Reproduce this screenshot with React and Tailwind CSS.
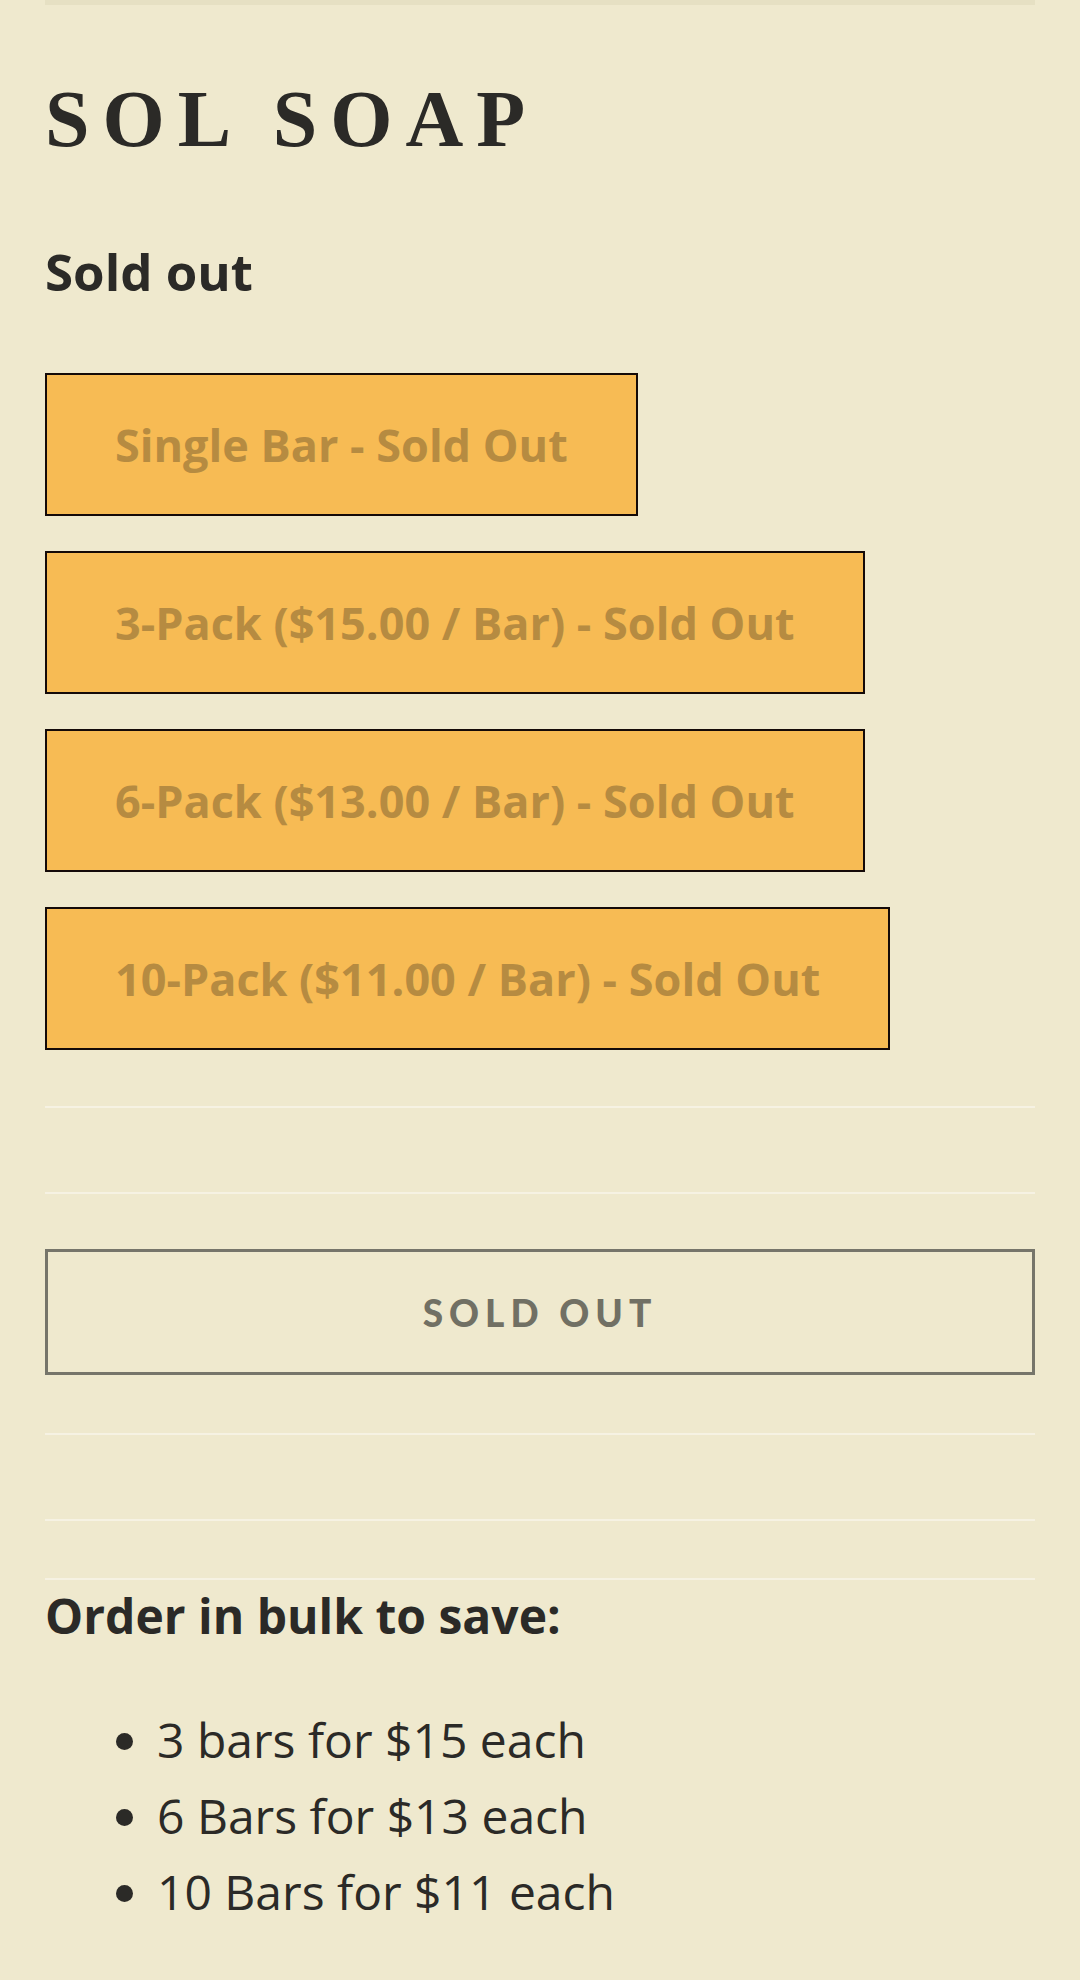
const variants = [
  "Single Bar - Sold Out",
  "3-Pack ($15.00 / Bar) - Sold Out",
  "6-Pack ($13.00 / Bar) - Sold Out",
  "10-Pack ($11.00 / Bar) - Sold Out",
];

const bulkDeals = [
  "3 bars for $15 each",
  "6 Bars for $13 each",
  "10 Bars for $11 each",
];

function Divider({ className = "" }) {
  return <div className={`h-[2px] w-full bg-[#f6f2e3] ${className}`} />;
}

export default function App() {
  return (
    <div className="min-h-[1980px] w-full bg-[#efe9ce] px-[45px] font-['Open_Sans',sans-serif] text-[#2b2a27]">
      {/* top strip */}
      <div className="h-[5px] w-full bg-[#e6e0c3]" />

      {/* Title */}
      <h1 className="mt-[74px] font-['Liberation_Serif',serif] text-[80px] font-bold leading-none tracking-[13px]">
        SOL SOAP
      </h1>

      <p className="mt-[87px] text-[51px] font-bold leading-none">Sold out</p>

      {/* Variant buttons */}
      <div className="mt-[76px] flex flex-col items-start gap-[35px]">
        {variants.map((label, index) => (
          <button
            key={index}
            disabled
            className="flex h-[143px] items-center border-2 border-[#140a08] bg-[#f7bb54] px-[68px] text-[45px] font-bold leading-none text-[#b68b41]"
          >
            {label}
          </button>
        ))}
      </div>

      <Divider className="mt-[56px]" />
      <Divider className="mt-[84px]" />

      {/* Add to cart (disabled) */}
      <button
        disabled
        className="mt-[55px] flex h-[126px] w-full items-center justify-center border-[3px] border-[#76756a] font-['Lato',sans-serif] text-[37px] font-black leading-none tracking-[6px] text-[#717064]"
      >
        SOLD OUT
      </button>

      <Divider className="mt-[58px]" />
      <Divider className="mt-[84px]" />
      <Divider className="mt-[57px]" />

      {/* Description */}
      <h2 className="mt-[12px] text-[48px] font-bold leading-none">
        Order in bulk to save:
      </h2>
      <ul className="mt-[62px]">
        {bulkDeals.map((deal, index) => (
          <li key={index} className="flex h-[76px] items-center text-[48px] leading-[76px]">
            <span className="ml-[71px] mr-[24px] mt-[3px] h-[17px] w-[17px] shrink-0 rounded-full bg-[#2b2a27]" />
            {deal}
          </li>
        ))}
      </ul>
    </div>
  );
}
